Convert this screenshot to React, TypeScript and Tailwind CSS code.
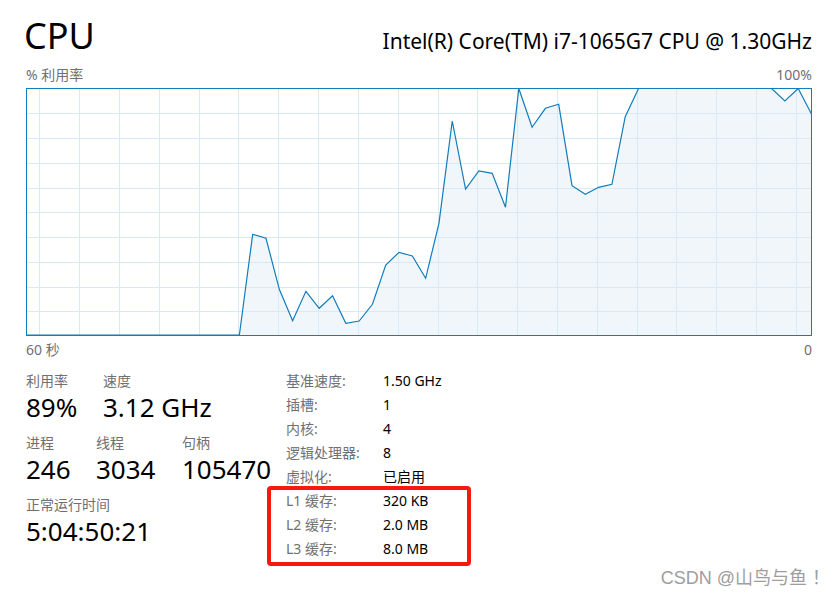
import React from "react";

const W = 786;
const H = 248;
const ys: number[] = [
  ...Array(17).fill(335),
  234.3, 238.3, 289.3, 320.7, 291.3, 308.3, 295.7, 323.3, 321, 304.3,
  265, 252.3, 256, 278.3, 223.3, 121, 189, 171, 173.3, 207.3,
  88, 127.3, 108.3, 104.3, 185.7, 194.3, 187.3, 184.3, 116.7,
  ...Array(11).fill(88),
  101, 88, 114,
];

function Chart() {
  const step = 785 / 59;
  const pts = ys.map((y, i) => [0.5 + i * step, Math.min(Math.max(y - 88, 0.5), 247.5)] as const);
  const line = pts.map(([x, y]) => `${x.toFixed(2)},${y.toFixed(2)}`).join(" ");
  const area = `0.5,247.5 ${line} 785.5,247.5`;
  const vlines = Array.from({ length: 20 }, (_, k) => 13.3 + k * 39.82);
  const hlines = Array.from({ length: 9 }, (_, k) => (k + 1) * 24.75 + 0.5);
  return (
    <svg width={W} height={H} viewBox={`0 0 ${W} ${H}`} className="block">
      <rect x={0} y={0} width={W} height={H} fill="#ffffff" />
      <polygon points={area} fill="#f1f6fa" />
      {vlines.map((x, i) => (
        <line key={"v" + i} x1={Math.round(x) + 0.5} x2={Math.round(x) + 0.5} y1={0} y2={H} stroke="#d9eaf4" strokeWidth={1} />
      ))}
      {hlines.map((y, i) => (
        <line key={"h" + i} x1={0} x2={W} y1={Math.round(y) + 0.5} y2={Math.round(y) + 0.5} stroke="#d9eaf4" strokeWidth={1} />
      ))}
      <polyline points={line} fill="none" stroke="#117dbb" strokeWidth={1.2} strokeLinejoin="miter" />
      <rect x={0.5} y={0.5} width={W - 1} height={H - 1} fill="none" stroke="#117dbb" strokeWidth={1} />
    </svg>
  );
}

function Stat({ label, value, w }: { label: string; value: string; w: string }) {
  return (
    <div className={`flex flex-col ${w}`}>
      <div className="text-[14px] leading-[20px] text-[#707070]">{label}</div>
      <div className="text-[26px] leading-[32px] text-black">{value}</div>
    </div>
  );
}

function Row({ label, value }: { label: string; value: string }) {
  return (
    <div className="flex h-[24px] items-center text-[14px] leading-[20px]">
      <div className="w-[97px] text-[#707070]">{label}</div>
      <div className="text-black">{value}</div>
    </div>
  );
}

export default function App() {
  return (
    <div className="relative w-[839px] h-[596px] overflow-hidden bg-white font-['Noto_Sans','Noto_Sans_CJK_SC',sans-serif]">
      <div className="pl-[26px] w-[812px]">
        <div className="flex items-baseline justify-between pt-[14px]">
          <div className="text-[36px] leading-[44px] -ml-[2px] text-black">CPU</div>
          <div className="text-[21px] leading-[30px] text-black">Intel(R) Core(TM) i7-1065G7 CPU @ 1.30GHz</div>
        </div>
        <div className="mt-[8px] flex h-[18px] items-center justify-between text-[14px] leading-[18px] text-[#707070]">
          <span>% 利用率</span>
          <span>100%</span>
        </div>
        <div className="mt-[4px]">
          <Chart />
        </div>
        <div className="mt-[5px] flex h-[18px] items-center justify-between text-[14px] leading-[18px] text-[#707070]">
          <span>60 秒</span>
          <span>0</span>
        </div>
        <div className="mt-[10px] flex">
          <div className="w-[260px] pt-[2px] flex flex-col gap-[10px]">
            <div className="flex">
              <Stat label="利用率" value="89%" w="w-[77px]" />
              <Stat label="速度" value="3.12 GHz" w="w-[150px]" />
            </div>
            <div className="flex">
              <Stat label="进程" value="246" w="w-[70px]" />
              <Stat label="线程" value="3034" w="w-[86px]" />
              <Stat label="句柄" value="105470" w="w-[100px]" />
            </div>
            <div className="flex">
              <Stat label="正常运行时间" value="5:04:50:21" w="w-[200px]" />
            </div>
          </div>
          <div className="flex flex-col">
            <Row label="基准速度:" value="1.50 GHz" />
            <Row label="插槽:" value="1" />
            <Row label="内核:" value="4" />
            <Row label="逻辑处理器:" value="8" />
            <Row label="虚拟化:" value="已启用" />
            <div className="relative">
              <Row label="L1 缓存:" value="320 KB" />
              <Row label="L2 缓存:" value="2.0 MB" />
              <Row label="L3 缓存:" value="8.0 MB" />
              <div className="pointer-events-none absolute left-[-19px] top-[-3px] w-[204px] h-[80px] rounded-[4px] border-[4px] border-[#f5190f]" />
            </div>
          </div>
        </div>
      </div>
      <div className="absolute right-[9px] bottom-[7px] text-[18px] leading-[22px] text-[#9e9e9e] font-['Liberation_Sans','Noto_Sans_CJK_SC',sans-serif]">
        CSDN @山鸟与鱼 ！
      </div>
    </div>
  );
}
